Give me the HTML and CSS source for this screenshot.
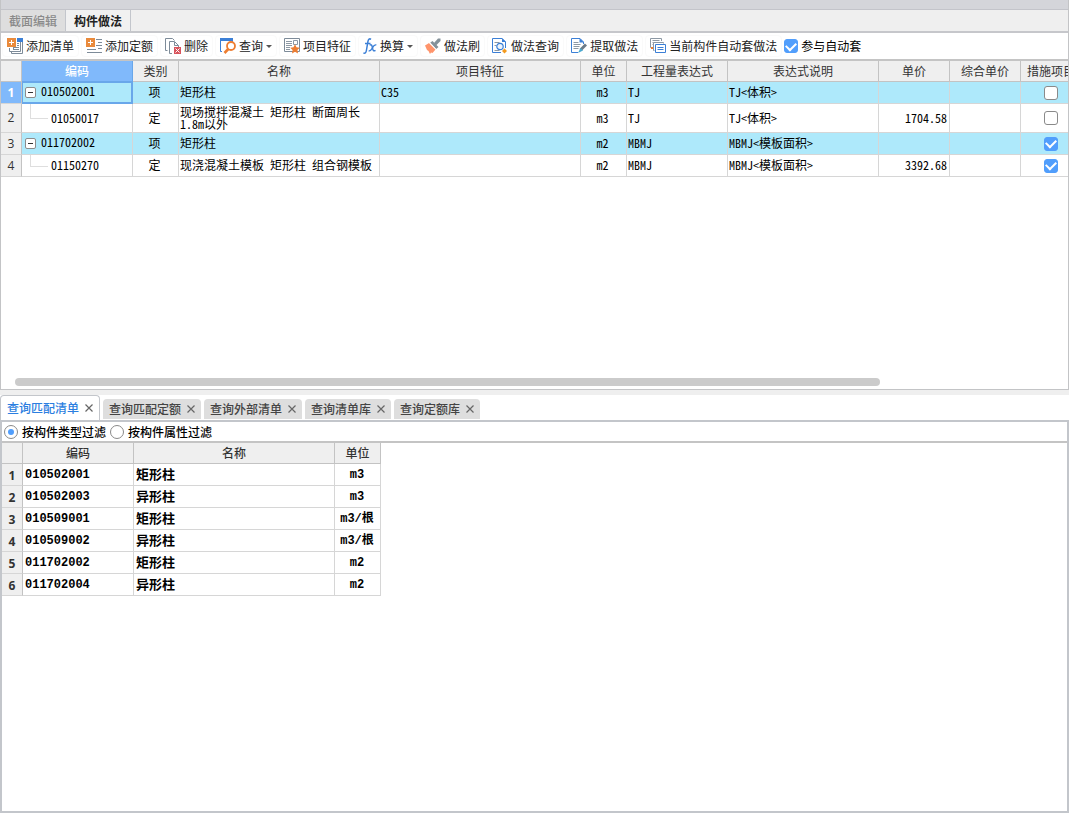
FILE: index.html
```html
<!DOCTYPE html>
<html lang="zh-CN">
<head>
<meta charset="utf-8">
<meta name="viewport" content="width=device-width, initial-scale=1">
<title>构件做法</title>
<link rel="stylesheet" href="styles.css">
</head>
<body>
<section class="upper">
  <div class="title-strip"></div>
  <nav class="main-tabs">
    <button class="main-tab">截面编辑</button>
    <button class="main-tab main-tab-active">构件做法</button>
  </nav>
  <div class="toolbar">
    <button class="tool">
      <svg class="icon" viewBox="0 0 16 16"><path d="M10 0h6v4h-6z" fill="#3b7fd6"/><path d="M15.500 4v11.500h-11V13M2.500 10v3.500h11V4M6.500 9.500v1.500M10 5.500h2M10 7.500h2M6 9.500h6M6 11.500h6" fill="none" stroke="#7d8b99"/><path d="M0 0h9v9H0z" fill="#e98a3c"/><path d="M2 4.500h5M4.500 2v5" stroke="#fff"/></svg>添加清单</button>
    <button class="tool">
      <svg class="icon" viewBox="0 0 16 16"><path d="M10 1.500h6M12 4.500h4M10 7.500h6M12 10.500h4M1 11.500h9M1 14.500h15" stroke="#7d8b99"/><path d="M0 0h9v9H0z" fill="#e98a3c"/><path d="M2 4.500h5M4.500 2v5" stroke="#fff"/></svg>添加定额</button>
    <button class="tool">
      <svg class="icon" viewBox="0 0 16 16" fill="none"><path d="M2.500 12.500h-2V.5h7l2 2" stroke="#7d8b99"/><path d="M7 15.500H4.500v-12h5l4 4V9M9.500 4v3.500h4" stroke="#7d8b99"/><path d="M9 9h7v7H9z" fill="#d8535b"/><path d="M10.500 10.500l4 4M14.500 10.500l-4 4" stroke="#fff"/></svg>删除</button>
    <button class="tool">
      <svg class="icon" viewBox="0 0 16 16" fill="none"><path d="M2 13.500H.5V2h12v2" stroke="#3b7fd6"/><path d="M0 0h13v3H0z" fill="#3b7fd6"/><circle cx="11" cy="8" r="4" stroke="#ed7d31" stroke-width="1.800"/><path d="M8.300 11L4.500 15" stroke="#ed7d31" stroke-width="2.600"/></svg>查询<span class="arrow"></span></button>
    <button class="tool">
      <svg class="icon" viewBox="0 0 16 16"><path d="M.5.500h15v13H.5z" fill="#fff" stroke="#7d8b99"/><path d="M2 3.500h6M2 5.500h6M2 7.500h6M2 9.500h4M2 11.500h4M9.500 2.500h4v4h-4z" fill="none" stroke="#8c98a4"/><path d="M11 6.300l1.500 3 3.300.4-2.400 2.300.6 3.400-3-1.600-3 1.600.6-3.400-2.400-2.300 3.300-.4z" fill="#ed7d31"/></svg>项目特征</button>
    <button class="tool">
      <svg class="icon icon-fx" viewBox="0 0 14 16" fill="none" stroke="#3b7fd6"><path d="M8 1.300C6.500.2 5.300 1.300 4.900 3.600L3.400 12.500C3 14.900 1.900 15.700.4 14.800M2 5.500h5.500" stroke-width="1.500"/><path d="M6.600 7.200c2-1.200 2.500.4 2.900 2.800s.9 3.600 3 2.400" stroke-width="1.500"/><path d="M13.400 7c-2-.9-3 1-4 2.900S7.400 13.500 5.600 12.700" stroke-width="1.200"/></svg>换算<span class="arrow"></span></button>
    <button class="tool">
      <svg class="icon" viewBox="0 0 16 16"><path d="M0 7.500l2.500-1.500 1.500-1 6.500 6.500-3 3.500-1.500-.5L5 16l-1.500-3L2 12z" fill="#ff946b"/><path d="M5.300 4.500L7.500 3l6 6-2.300 2z" fill="#84919a"/><path d="M9 5l4-4.500h2.500V3L11 7.500z" fill="#84919a"/><path d="M4.500 4.800l6.500 6.500" stroke="#fff" stroke-width=".8"/></svg>做法刷</button>
    <button class="tool">
      <svg class="icon" viewBox="0 0 16 16" fill="none"><path d="M9 14.500H.5V.5H10L13.500 4v6" stroke="#3b7fd6"/><path d="M10 0v4h4z" fill="#3b7fd6"/><path d="M2.500 4.500h5M2.500 7.500h2M2.500 12.500h5" stroke="#8c98a4"/><circle cx="8" cy="8.500" r="3.200" stroke="#3b7fd6" fill="#eef5fc" stroke-width="1.200"/><path d="M12.500 10.500l2.500 2.500-2.500 2.500L10 13z" fill="#f39a1e"/></svg>做法查询</button>
    <button class="tool">
      <svg class="icon" viewBox="0 0 16 16" fill="none"><path d="M7 14.500H.5V.5H9L12.500 4v2" stroke="#3b7fd6"/><path d="M8.500 0v4.500H13z" fill="#3b7fd6"/><path d="M2.500 4.500h5M2.500 6.500h7M2.500 8.500h6M2.500 10.500h5" stroke="#8c98a4"/><path d="M15 6.500L9.500 12" stroke="#6c7a87" stroke-width="3"/><path d="M9.500 10l2.500 2.500L7 15z" fill="#49a8cf"/></svg>提取做法</button>
    <button class="tool">
      <svg class="icon" viewBox="0 0 16 16" fill="none"><path d="M2.500 9.500H.5v-9h11V3M2.500 2.500h7M2.500 4.500h1M2.500 6.500h1" stroke="#8c98a4"/><path d="M4.500 12.500h-1v-8h10v1" stroke="#8c98a4"/><path d="M5.500 6.500h10v8h-10z" fill="#fff" stroke="#3b7fd6"/><path d="M7.500 9.500h6M7.500 11.500h6" stroke="#3b7fd6"/><path d="M1 9h2v2H1z" fill="#ed7d31"/></svg>当前构件自动套做法</button>
    <label class="auto-label"><input type="checkbox" class="check" checked>参与自动套</label>
  </div>
  <div class="grid-area">
    <table class="grid">
      <colgroup><col class="c-num"><col class="c-code"><col class="c-unit"><col class="c-name"><col class="c-name"><col class="c-unit"><col class="c-expr"><col class="c-desc"><col class="c-price"><col class="c-price"><col class="c-last"></colgroup>
      <thead><tr><th></th><th class="th-selected">编码</th><th>类别</th><th>名称</th><th>项目特征</th><th>单位</th><th>工程量表达式</th><th>表达式说明</th><th>单价</th><th>综合单价</th><th>措施项目</th></tr></thead>
      <tbody>
        <tr class="item"><th class="num-selected">1</th><td class="parent cell-selected"><button class="toggle" aria-label="折叠"></button>010502001</td><td class="center">项</td><td>矩形柱</td><td>C35</td><td class="center">m3</td><td>TJ</td><td>TJ&lt;体积&gt;</td><td class="right"></td><td></td><td class="measure"><input type="checkbox" class="check" aria-label="措施项目 1"></td></tr>
        <tr class="tall"><th>2</th><td class="child">01050017</td><td class="center">定</td><td>现场搅拌混凝土 矩形柱 断面周长1.8m以外</td><td></td><td class="center">m3</td><td>TJ</td><td>TJ&lt;体积&gt;</td><td class="right">1704.58</td><td></td><td class="measure"><input type="checkbox" class="check" aria-label="措施项目 2"></td></tr>
        <tr class="item"><th>3</th><td class="parent"><button class="toggle" aria-label="折叠"></button>011702002</td><td class="center">项</td><td>矩形柱</td><td></td><td class="center">m2</td><td>MBMJ</td><td>MBMJ&lt;模板面积&gt;</td><td class="right"></td><td></td><td class="measure"><input type="checkbox" class="check" aria-label="措施项目 3" checked></td></tr>
        <tr><th>4</th><td class="child">01150270</td><td class="center">定</td><td>现浇混凝土模板 矩形柱 组合钢模板</td><td></td><td class="center">m2</td><td>MBMJ</td><td>MBMJ&lt;模板面积&gt;</td><td class="right">3392.68</td><td></td><td class="measure"><input type="checkbox" class="check" aria-label="措施项目 4" checked></td></tr>
      </tbody>
    </table>
    <div class="scroll-track"><div class="scroll-thumb"></div></div>
  </div>
</section>
<section class="lower">
  <div class="splitter"></div>
  <div class="query-tabs">
    <div class="query-tab query-tab-active"><button class="query-name">查询匹配清单</button><button class="close" aria-label="关闭"><svg viewBox="0 0 8 8"><path d="M.5.500l7 7M7.500.500l-7 7"/></svg></button></div>
    <div class="query-tab"><button class="query-name">查询匹配定额</button><button class="close" aria-label="关闭"><svg viewBox="0 0 8 8"><path d="M.5.500l7 7M7.500.500l-7 7"/></svg></button></div>
    <div class="query-tab"><button class="query-name">查询外部清单</button><button class="close" aria-label="关闭"><svg viewBox="0 0 8 8"><path d="M.5.500l7 7M7.500.500l-7 7"/></svg></button></div>
    <div class="query-tab"><button class="query-name">查询清单库</button><button class="close" aria-label="关闭"><svg viewBox="0 0 8 8"><path d="M.5.500l7 7M7.500.500l-7 7"/></svg></button></div>
    <div class="query-tab"><button class="query-name">查询定额库</button><button class="close" aria-label="关闭"><svg viewBox="0 0 8 8"><path d="M.5.500l7 7M7.500.500l-7 7"/></svg></button></div>
  </div>
  <div class="query-panel">
    <div class="filters">
      <label class="filter"><input type="radio" class="radio" name="filter" checked>按构件类型过滤</label>
      <label class="filter"><input type="radio" class="radio" name="filter">按构件属性过滤</label>
    </div>
    <table class="grid grid-match">
      <colgroup><col class="c-num"><col class="c-code"><col class="c-name"><col class="c-unit"></colgroup>
      <thead><tr><th></th><th>编码</th><th>名称</th><th>单位</th></tr></thead>
      <tbody>
        <tr><th>1</th><td class="code">010502001</td><td>矩形柱</td><td class="center code">m3</td></tr>
        <tr><th>2</th><td class="code">010502003</td><td>异形柱</td><td class="center code">m3</td></tr>
        <tr><th>3</th><td class="code">010509001</td><td>矩形柱</td><td class="center code">m3/根</td></tr>
        <tr><th>4</th><td class="code">010509002</td><td>异形柱</td><td class="center code">m3/根</td></tr>
        <tr><th>5</th><td class="code">011702002</td><td>矩形柱</td><td class="center code">m2</td></tr>
        <tr><th>6</th><td class="code">011702004</td><td>异形柱</td><td class="center code">m2</td></tr>
      </tbody>
    </table>
  </div>
</section>
</body>
</html>
```
FILE: styles.css
```css
* { box-sizing: border-box; }

body {
  margin: 0;
  height: 100vh;
  display: flex;
  flex-direction: column;
  background: #fff;
  color: #000;
  font: 12px/16px "Noto Sans CJK SC", sans-serif;
}

button {
  border: 0;
  padding: 0;
  background: none;
  color: inherit;
  font: inherit;
  white-space: nowrap;
}

.upper {
  flex: 389 1 0;
  min-height: 0;
  display: flex;
  flex-direction: column;
  border: solid #c3c4c6;
  border-width: 0 1px 1px;
}

.title-strip {
  height: 10px;
  flex: none;
  background: #d4d5da;
  border-bottom: 1px solid #c3c4ca;
}

.main-tabs {
  display: flex;
  flex: none;
  height: 23px;
  background: #efefef;
  border-bottom: 2px solid #c6c7cb;
}

.main-tab {
  padding: 0 8px;
  border-right: 1px solid #c3c6cc;
  background: #dedede;
  color: #8a8a8a;
  font-weight: 500;
}

.main-tab-active {
  background: #f1f1f1;
  color: #222;
  font-weight: 700;
}

.toolbar {
  display: flex;
  flex: none;
  align-items: center;
  gap: 2px;
  height: 28px;
  padding: 0 1px;
  border-bottom: 2px solid #c4c4c4;
}

.tool {
  display: flex;
  align-items: center;
  gap: 3px;
  height: 22px;
  padding: 0 4px;
  border: 1px solid #fafafa;
  border-radius: 4px;
  color: #222;
}

.icon { width: 16px; height: 16px; flex: none; }
.icon-fx { width: 14px; }

.arrow {
  border: solid transparent;
  border-width: 3px 3px 0;
  border-top-color: #555;
}

.auto-label, .filter {
  display: flex;
  align-items: center;
  gap: 3px;
  white-space: nowrap;
}

.check {
  appearance: none;
  display: inline-grid;
  place-items: center;
  width: 14px;
  height: 14px;
  margin: 0;
  border: 1px solid #8a8a8a;
  border-radius: 3px;
  background: #fff;
  vertical-align: middle;
}

.check:checked { border-color: #519efc; background: #519efc; }

.check:checked::before {
  content: "";
  width: 8px;
  height: 5px;
  margin-bottom: 2px;
  border: solid #fff;
  border-width: 0 0 2px 2px;
  transform: rotate(-45deg);
}

.grid-area {
  flex: 1;
  min-height: 0;
  display: flex;
  flex-direction: column;
  justify-content: space-between;
  overflow: hidden;
}

.grid {
  flex: none;
  width: 0;
  table-layout: fixed;
  border-collapse: separate;
  border-spacing: 0;
}

.c-num { width: 21px; }
.c-code { width: 111px; }
.c-unit { width: 46px; }
.c-name { width: 201px; }
.c-expr { width: 101px; }
.c-desc { width: 151px; }
.c-price { width: 71px; }
.c-last { width: 61px; }

.grid th, .grid td {
  height: 22px;
  padding: 0 1px;
  border: solid #d6d6d6;
  border-width: 0 1px 1px 0;
}

.grid thead th {
  height: 21px;
  padding: 0;
  border-color: #c3c3c3;
  background: #efefef;
  color: #333;
  font-weight: 400;
  line-height: 16px;
}

.grid thead .th-selected {
  background: #80b9fb;
  border-color: #69a7ea;
  color: #fff;
  font-weight: 500;
}

.grid tbody th {
  border-right-color: #c3c3c3;
  background: #efefef;
  color: #333;
  font: 12px/16px "Open Sans", sans-serif;
}

.grid tbody .num-selected {
  background: #80b9fb;
  color: #fff;
  font-weight: 700;
}

.grid td {
  padding-bottom: 2px;
  font: 12px/12px "Noto Sans Mono CJK SC", "Noto Sans CJK SC", monospace;
}

.grid .tall td { height: 29px; padding-bottom: 0; }
.item td { background: #aee9fb; }
.grid .center { padding-right: 3px; text-align: center; }
.grid .measure { padding-bottom: 0; text-align: center; }
.grid .right { padding-right: 2px; text-align: right; }
.grid .parent { padding-left: 3px; }

.grid .cell-selected {
  border-color: #69a7ea;
  box-shadow: inset 1px 1px #69a7ea, inset -1px -1px #69a7ea;
}

.toggle {
  display: inline-grid;
  place-items: center;
  width: 11px;
  height: 11px;
  margin-right: 5px;
  border: 1px solid #8c8c8c;
  border-radius: 2px;
  background: #fff;
  vertical-align: middle;
}

.toggle::before {
  content: "";
  width: 5px;
  height: 1px;
  background: #333;
}

.grid .child {
  position: relative;
  padding-left: 29px;
}

.child::before {
  content: "";
  position: absolute;
  left: 8px;
  top: 0;
  width: 17px;
  height: 50%;
  border: solid #dedede;
  border-width: 0 0 1px 1px;
}

.scroll-track { padding: 0 188px 3px 14px; }
.scroll-thumb { height: 8px; border-radius: 4px; background: #cbcbcb; }

.lower {
  flex: 423 1 0;
  min-height: 0;
  display: flex;
  flex-direction: column;
}

.splitter { height: 5px; flex: none; background: #efefef; }

.query-tabs {
  display: flex;
  flex: none;
  align-items: flex-end;
  gap: 3px;
  height: 25px;
}

.query-tab {
  display: flex;
  align-items: center;
  gap: 6px;
  height: 20px;
  margin-bottom: 1px;
  padding: 0 6px;
  border-radius: 4px 4px 0 0;
  background: #dedede;
  color: #444;
  font-weight: 500;
}

.query-tab-active {
  height: 25px;
  margin-bottom: 0;
  border: 1px solid #c3c6cb;
  border-bottom: 0;
  background: #fff;
  color: #2b7ee0;
}

.close { display: flex; width: 8px; height: 8px; }
.close svg { width: 8px; height: 8px; stroke: #666; stroke-width: 1.2; }

.query-panel {
  flex: 1;
  min-height: 0;
  border: 2px solid #c3c6cb;
}

.filters {
  display: flex;
  align-items: center;
  gap: 4px;
  height: 21px;
  padding: 0 2px;
  border-bottom: 2px solid #c4c4c4;
  font-weight: 500;
}

.filter { gap: 4px; }

.radio {
  appearance: none;
  display: grid;
  place-items: center;
  width: 14px;
  height: 14px;
  margin: 0;
  border: 1px solid #8a8a8a;
  border-radius: 50%;
  background: #fff;
}

.radio:checked::before {
  content: "";
  width: 6px;
  height: 6px;
  border-radius: 50%;
  background: #519efc;
}

.grid-match thead th { font-weight: 500; }
.grid-match tbody th { padding-top: 2px; font-weight: 700; }

.grid-match td {
  padding: 0 2px 2px;
  font-size: 13px;
  font-weight: 700;
}

.grid-match .code {
  padding-bottom: 0;
  font-family: "Liberation Mono", "Noto Sans CJK SC", monospace;
  font-size: 12px;
}
```
